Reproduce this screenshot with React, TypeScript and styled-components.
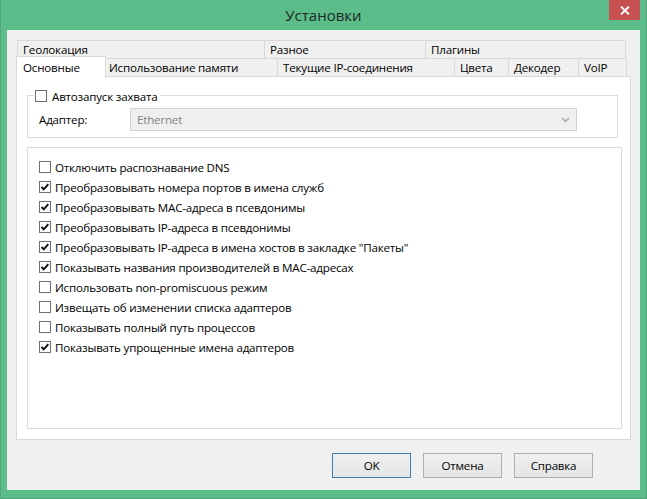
import * as React from "react";
import styled, { createGlobalStyle } from "styled-components";

const GlobalStyle = createGlobalStyle`
  html, body { margin: 0; padding: 0; background: #5cbd8b; }
  body {
    font-family: "Open Sans", "Noto Sans", sans-serif;
    font-size: 11.6px;
    letter-spacing: -0.2px;
    color: #000;
  }
`;

const Frame = styled.div`
  width: 647px;
  height: 499px;
  box-sizing: border-box;
  background: #5cbd8b;
  border: 1px solid #4fa77a;
  border-top: none;
  display: flex;
  flex-direction: column;
`;

const TitleBar = styled.div`
  position: relative;
  height: 30px;
  display: flex;
  align-items: center;
  justify-content: center;
  font-size: 15px;
  letter-spacing: 0;
  color: #1d2b24;
`;

const CloseButton = styled.div`
  position: absolute;
  top: 0;
  right: 6px;
  width: 31px;
  height: 20px;
  background: #c75050;
  display: flex;
  align-items: center;
  justify-content: center;
`;

const Client = styled.div`
  margin: 0 6px 8px 6px;
  flex: 1;
  background: #f0f0f0;
  padding: 10px 0 0 9px;
  display: flex;
  flex-direction: column;
`;

const TabRows = styled.div`
  display: flex;
  flex-direction: column;
  margin-left: 2px;
  width: 609px;
`;

const TabRow = styled.div`
  display: flex;
  height: 18px;
`;

const Tab = styled.div<{ $active?: boolean }>`
  box-sizing: border-box;
  height: ${(p) => (p.$active ? "22px" : "19px")};
  margin-top: ${(p) => (p.$active ? "-2px" : "0")};
  margin-left: ${(p) => (p.$active ? "-2px" : "-1px")};
  margin-right: ${(p) => (p.$active ? "-2px" : "0")};
  border: 1px solid #d9d9d9;
  border-bottom: ${(p) => (p.$active ? "none" : "1px solid #d9d9d9")};
  background: ${(p) => (p.$active ? "#fff" : "#f0f0f0")};
  position: relative;
  z-index: ${(p) => (p.$active ? 2 : 1)};
  padding: ${(p) => (p.$active ? "2px 0 0 6px" : "0 0 0 5px")};
  line-height: 17px;
  white-space: nowrap;
  overflow: hidden;
`;

const Panel = styled.div`
  box-sizing: border-box;
  width: 615px;
  height: 364px;
  background: #fff;
  border: 1px solid #d9d9d9;
  position: relative;
  z-index: 1;
  padding: 18px 0 0 10px;
  display: flex;
  flex-direction: column;
`;

const GroupBox = styled.div<{ $w: number; $h: number }>`
  box-sizing: border-box;
  width: ${(p) => p.$w}px;
  height: ${(p) => p.$h}px;
  border: 1px solid #dcdcdc;
  position: relative;
`;

const Legend = styled.div`
  position: absolute;
  top: -8px;
  left: 6px;
  padding: 0 2px 0 1px;
  background: #fff;
  display: flex;
  align-items: center;
  gap: 5px;
  height: 16px;
`;

const AdapterRow = styled.div`
  display: flex;
  align-items: center;
  margin: 12px 0 0 11px;
`;

const AdapterLabel = styled.div`
  width: 91px;
`;

const Combo = styled.div`
  box-sizing: border-box;
  width: 447px;
  height: 23px;
  background: #efefef;
  border: 1px solid #d3d3d3;
  color: #838383;
  display: flex;
  align-items: center;
  justify-content: space-between;
  padding: 0 6px;
`;

const Options = styled.div`
  display: flex;
  flex-direction: column;
  padding: 9px 0 0 11px;
`;

const OptionRow = styled.div`
  display: flex;
  align-items: center;
  gap: 4px;
  height: 20px;
`;

const Footer = styled.div`
  display: flex;
  justify-content: flex-end;
  gap: 12px;
  margin-top: 13px;
  padding-right: 47px;
`;

const Button = styled.div<{ $default?: boolean }>`
  box-sizing: border-box;
  width: 79px;
  height: 25px;
  border: 1px solid ${(p) => (p.$default ? "#3c7fb1" : "#adadad")};
  background: linear-gradient(#f0f0f0, #e5e5e5);
  display: flex;
  align-items: center;
  justify-content: center;
`;

function Check({ on }: { on?: boolean }) {
  return (
    <svg width="12" height="12" viewBox="0 0 12 12" style={{ flex: "none" }}>
      <rect x="0.5" y="0.5" width="11" height="11" fill="#fff" stroke="#707070" />
      {on && (
        <path d="M2.6 6 L4.8 8.4 L9.3 3.2" fill="none" stroke="#111" strokeWidth="1.9" />
      )}
    </svg>
  );
}

const backTabs: [string, number][] = [
  ["Геолокация", 248],
  ["Разное", 162],
  ["Плагины", 201],
];

const frontTabs: [string, number][] = [
  ["Основные", 90],
  ["Использование памяти", 175],
  ["Текущие IP-соединения", 178],
  ["Цвета", 55],
  ["Декодер", 71],
  ["VoIP", 49],
];

const options: [string, boolean][] = [
  ["Отключить распознавание DNS", false],
  ["Преобразовывать номера портов в имена служб", true],
  ["Преобразовывать MAC-адреса в псевдонимы", true],
  ["Преобразовывать IP-адреса в псевдонимы", true],
  ["Преобразовывать IP-адреса в имена хостов в закладке \"Пакеты\"", true],
  ["Показывать названия производителей в MAC-адресах", true],
  ["Использовать non-promiscuous режим", false],
  ["Извещать об изменении списка адаптеров", false],
  ["Показывать полный путь процессов", false],
  ["Показывать упрощенные имена адаптеров", true],
];

export default function App() {
  return (
    <>
      <GlobalStyle />
      <Frame>
        <TitleBar>
          Установки
          <CloseButton>
            <svg width="10" height="9" viewBox="0 0 10 9">
              <path d="M1 0.5 L9 8.5 M9 0.5 L1 8.5" stroke="#fff" strokeWidth="1.8" />
            </svg>
          </CloseButton>
        </TitleBar>
        <Client>
          <TabRows>
            <TabRow>
              {backTabs.map(([t, w]) => (
                <Tab key={t} style={{ width: w }}>{t}</Tab>
              ))}
            </TabRow>
            <TabRow>
              {frontTabs.map(([t, w], i) => (
                <Tab key={t} $active={i === 0} style={{ width: w }}>{t}</Tab>
              ))}
            </TabRow>
          </TabRows>
          <Panel>
            <GroupBox $w={591} $h={43}>
              <Legend>
                <Check />
                Автозапуск захвата
              </Legend>
              <AdapterRow>
                <AdapterLabel>Адаптер:</AdapterLabel>
                <Combo>
                  Ethernet
                  <svg width="9" height="6" viewBox="0 0 9 6">
                    <path d="M1 1 L4.5 4.5 L8 1" fill="none" stroke="#a8a8a8" strokeWidth="1.5" />
                  </svg>
                </Combo>
              </AdapterRow>
            </GroupBox>
            <GroupBox $w={595} $h={282} style={{ marginTop: 9 }}>
              <Options>
                {options.map(([t, on]) => (
                  <OptionRow key={t}>
                    <Check on={on} />
                    {t}
                  </OptionRow>
                ))}
              </Options>
            </GroupBox>
          </Panel>
          <Footer>
            <Button $default>OK</Button>
            <Button>Отмена</Button>
            <Button>Справка</Button>
          </Footer>
        </Client>
      </Frame>
    </>
  );
}
